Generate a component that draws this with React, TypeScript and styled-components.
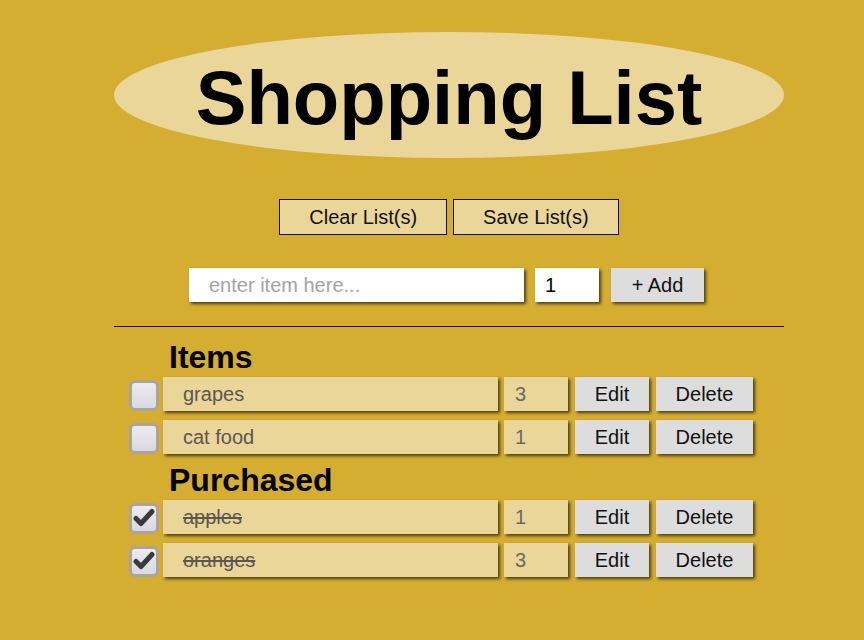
import styled, { createGlobalStyle } from "styled-components";

type Item = { name: string; qty: number };

const items: Item[] = [
  { name: "grapes", qty: 3 },
  { name: "cat food", qty: 1 },
];

const purchased: Item[] = [
  { name: "apples", qty: 1 },
  { name: "oranges", qty: 3 },
];

export default function App() {
  return <>
    <GlobalStyle />
    <Page>
      <TitleOval>
        <Title>Shopping List</Title>
      </TitleOval>

      <ListButtons>
        <OutlineButton>Clear List(s)</OutlineButton>
        <OutlineButton>Save List(s)</OutlineButton>
      </ListButtons>

      <AddRow>
        <TextInput placeholder="enter item here..." />
        <QtyInput defaultValue="1" />
        <GrayButton width={93}>+ Add</GrayButton>
      </AddRow>

      <Rule />

      <Section>
        <Heading>Items</Heading>
        {items.map(i => <ItemRow key={i.name} item={i} done={false} />)}
      </Section>

      <Section>
        <Heading>Purchased</Heading>
        {purchased.map(i => <ItemRow key={i.name} item={i} done={true} />)}
      </Section>
    </Page>
  </>;
}

function ItemRow(props: { item: Item, done: boolean }) {
  return <Row>
    <CheckBox>
      {props.done &&
        <svg width="22" height="20" viewBox="0 0 22 20">
          <path d="M3 10.5 L8 15.5 L19 3.5" fill="none" stroke="#3a3a3a" strokeWidth="5" strokeLinecap="round" strokeLinejoin="round" />
        </svg>}
    </CheckBox>
    <NameField done={props.done}>{props.item.name}</NameField>
    <QtyField>{props.item.qty}</QtyField>
    <GrayButton width={74}>Edit</GrayButton>
    <GrayButton width={97}>Delete</GrayButton>
  </Row>;
}

const GlobalStyle = createGlobalStyle`
  html, body {
    margin: 0;
    background: #d5ad31;
    font-family: "Liberation Sans", Arial, sans-serif;
  }
`;

const Page = styled.div`
  width: 670px;
  margin-left: 114px;
  padding-top: 32px;
  padding-bottom: 40px;
  display: flex;
  flex-direction: column;
`;

const TitleOval = styled.div`
  height: 126px;
  border-radius: 50%;
  background: #ebd69a;
  display: flex;
  align-items: center;
  justify-content: center;
  padding-top: 6px;
  box-sizing: border-box;
`;

const Title = styled.h1`
  margin: 0;
  font-size: 76px;
  font-weight: bold;
  color: #000;
  line-height: 1;
`;

const ListButtons = styled.div`
  margin-top: 41px;
  display: flex;
  justify-content: center;
  gap: 6px;
`;

const OutlineButton = styled.button`
  height: 36px;
  padding: 0 29px;
  border: 1px solid #111;
  background: #ebd69a;
  font-family: inherit;
  font-size: 20px;
  color: #111;
`;

const AddRow = styled.div`
  margin-top: 33px;
  display: flex;
  justify-content: center;
  padding-right: 5px;
`;

const Shadowed = `
  box-shadow: 2px 2px 3px rgba(0, 0, 0, 0.65);
  box-sizing: border-box;
  height: 34px;
  border: none;
  font-family: inherit;
  font-size: 20px;
`;

const TextInput = styled.input`
  ${Shadowed}
  width: 335px;
  padding: 0 20px;
  background: #fff;
  outline: none;
  &::placeholder { color: #a3a3a3; }
`;

const QtyInput = styled.input`
  ${Shadowed}
  width: 64px;
  margin-left: 11px;
  padding: 0 10px;
  background: #fff;
  color: #000;
  outline: none;
`;

const GrayButton = styled.button<{ width: number }>`
  ${Shadowed}
  width: ${p => p.width}px;
  flex-shrink: 0;
  margin-left: ${p => p.width === 93 ? 12 : 7}px;
  background: #dddddd;
  color: #111;
  padding: 0;
`;

const Rule = styled.div`
  margin-top: 24px;
  height: 1px;
  background: #1c1400;
`;

const Section = styled.div`
  display: flex;
  flex-direction: column;
  gap: 9px;
  padding-left: 15px;
  margin-top: 14px;
  &:last-child { margin-top: 10px; }
`;

const Heading = styled.h2`
  margin: 0 0 -5px 40px;
  font-size: 32px;
  line-height: 32px;
  font-weight: bold;
  color: #000;
`;

const Row = styled.div`
  display: flex;
  align-items: center;
`;

const CheckBox = styled.div`
  width: 30px;
  height: 31px;
  box-sizing: border-box;
  border: 3px solid #aaa59c;
  border-radius: 6px;
  background: linear-gradient(#ebebf0, #d9d9e0);
  display: flex;
  align-items: center;
  justify-content: center;
  margin-top: 2px;
`;

const Field = styled.div`
  ${Shadowed}
  background: #ebd69a;
  display: flex;
  align-items: center;
  color: #5a5750;
`;

const NameField = styled(Field)<{ done: boolean }>`
  width: 335px;
  margin-left: 4px;
  padding-left: 20px;
  text-decoration: ${p => p.done ? "line-through" : "none"};
`;

const QtyField = styled(Field)`
  width: 64px;
  margin-left: 6px;
  padding-left: 11px;
  color: #6a6760;
`;
